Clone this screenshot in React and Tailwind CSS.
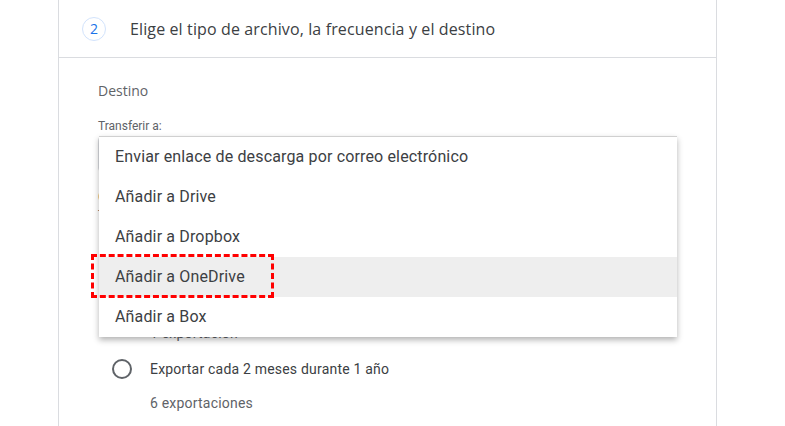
export default function App() {
  const items = [
    "Enviar enlace de descarga por correo electrónico",
    "Añadir a Drive",
    "Añadir a Dropbox",
    "Añadir a OneDrive",
    "Añadir a Box",
  ];
  return (
    <div className="relative w-[785px] h-[426px] overflow-hidden bg-white" style={{ fontFamily: "Roboto, 'Liberation Sans', sans-serif" }}>
      <div className="ml-[58px] w-[659px] h-[426px] border-x border-[#dadce0]">
        <div className="h-[58px] border-b border-[#dadce0] flex items-center pl-[23px]">
          <div className="w-[24px] h-[24px] rounded-full border border-[#d2e3fc] flex items-center justify-center text-[14px] text-[#1a73e8]" style={{ fontFamily: "'Open Sans', sans-serif" }}>2</div>
          <div className="ml-[24px] text-[16px] tracking-[0.12px] text-[#3c4043]" style={{ fontFamily: "'Open Sans', sans-serif" }}>Elige el tipo de archivo, la frecuencia y el destino</div>
        </div>
        <div className="pl-[39px] pr-[40px]">
          <div className="mt-[23px] h-[20px] leading-[20px] text-[14px] font-medium text-[#5f6368]" style={{ fontFamily: "'Open Sans', sans-serif" }}>Destino</div>
          <div className="mt-[17px] h-[16px] leading-[16px] text-[12px] text-[#5f6368]">Transferir a:</div>
          <div className="mt-[2px] h-[36px] w-[578px] border border-[#dadce0] rounded"></div>
          <div className="mt-[15px] h-[20px] leading-[20px] text-[14px] text-[#3c4043]">Cuándo</div>
          <div className="h-[16px] leading-[16px] text-[12px] text-[#5f6368]">Tipo de exportación</div>
          <div className="mt-[66px] h-[24px] flex items-center pl-[14px]">
            <div className="w-[20px] h-[20px] rounded-full border-2 border-[#5f6368]"></div>
            <div className="ml-[18px] text-[14px] tracking-[0.2px] text-[#3c4043]">Exportar una vez</div>
          </div>
          <div className="mt-[10px] h-[20px] leading-[20px] pl-[52px] text-[14px] tracking-[0.2px] text-[#5f6368]">1 exportación</div>
          <div className="mt-[14px] h-[24px] flex items-center pl-[14px]">
            <div className="w-[20px] h-[20px] rounded-full border-2 border-[#5f6368]"></div>
            <div className="ml-[18px] text-[14px] tracking-[0.2px] text-[#3c4043]">Exportar cada 2 meses durante 1 año</div>
          </div>
          <div className="mt-[12px] h-[20px] leading-[20px] pl-[52px] text-[14px] tracking-[0.2px] text-[#5f6368]">6 exportaciones</div>
        </div>
      </div>

      <div className="absolute left-[99px] top-[136px] w-[578px] bg-white border-t border-[#d0d0d0] shadow-[0_3px_6px_rgba(0,0,0,0.3)]">
        {items.map((t, i) => (
          <div key={i} className={`h-[40px] flex items-center pl-[16px] text-[16px] tracking-[0.15px] text-[#3c4043] ${i === 3 ? "bg-[#eeeeee]" : ""}`}>{t}</div>
        ))}
      </div>

      <div className="absolute left-[91px] top-[254px] w-[183px] h-[44px] border-[3px] border-dashed border-[#ff0000]"></div>
    </div>
  );
}
